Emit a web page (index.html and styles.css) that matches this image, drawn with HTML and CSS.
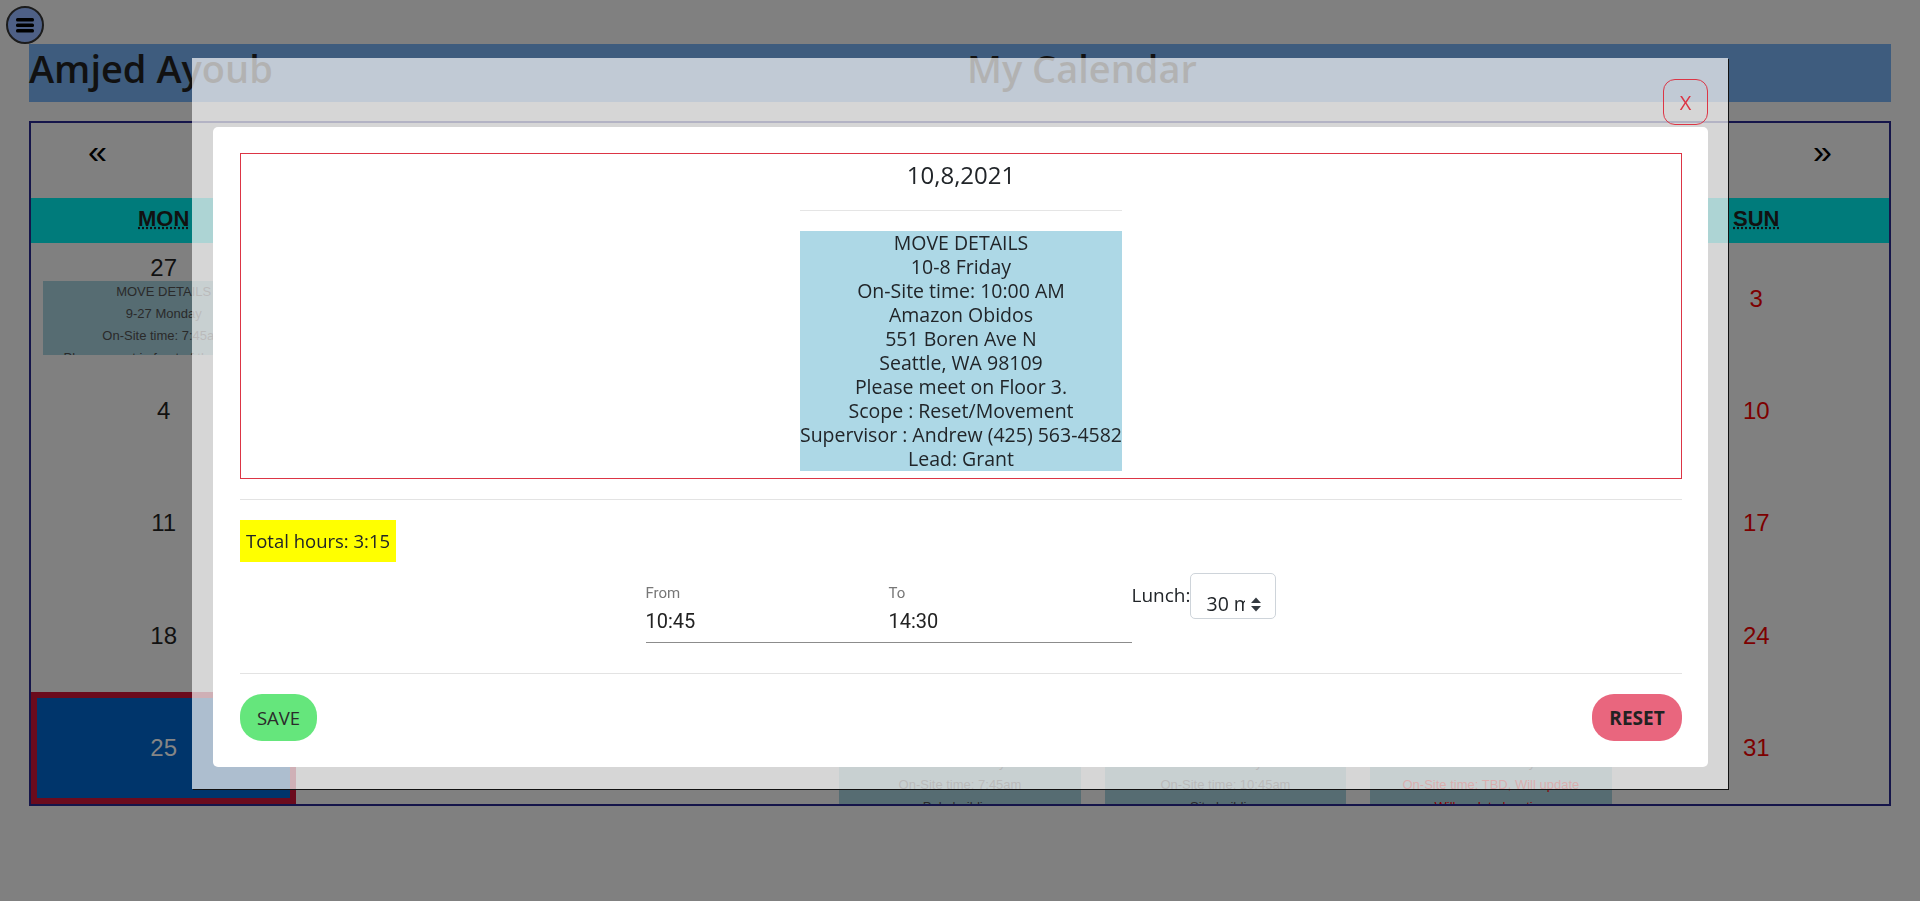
FILE: index.html
```html
<!DOCTYPE html>
<html lang="en">
<head>
<meta charset="utf-8">
<title>My Calendar</title>
<link rel="stylesheet" href="styles.css">
</head>
<body>
<button class="menu-btn" aria-label="Menu">
  <svg viewBox="0 0 18 15" width="18" height="15" aria-hidden="true">
    <rect x="0" y="0" width="18" height="3.5" rx="1.5" fill="#000"/>
    <rect x="0" y="5.5" width="18" height="3.5" rx="1.5" fill="#000"/>
    <rect x="0" y="11" width="18" height="3.5" rx="1.5" fill="#000"/>
  </svg>
</button>

<header class="page-header">
  <h1 class="user-name">Amjed Ayoub</h1>
  <h1 class="page-title">My Calendar</h1>
</header>

<section class="calendar">
  <div class="cal-nav">
    <span class="nav-arrow">«</span>
    <span class="nav-arrow">»</span>
  </div>
  <div class="cal-weekdays">
    <div class="weekday"><abbr title="Monday">MON</abbr></div>
    <div class="weekday"><abbr title="Tuesday">TUE</abbr></div>
    <div class="weekday"><abbr title="Wednesday">WED</abbr></div>
    <div class="weekday"><abbr title="Thursday">THU</abbr></div>
    <div class="weekday"><abbr title="Friday">FRI</abbr></div>
    <div class="weekday"><abbr title="Saturday">SAT</abbr></div>
    <div class="weekday"><abbr title="Sunday">SUN</abbr></div>
  </div>
  <div class="cal-grid">
    <div class="day has-event"><span class="day-num">27</span>
      <div class="event">
        <div>MOVE DETAILS</div>
        <div>9-27 Monday</div>
        <div>On-Site time: 7:45am</div>
        <div>Please meet in front of the building</div>
        <div>Amazon Doppler</div>
      </div>
    </div>
    <div class="day"><span class="day-num">28</span></div>
    <div class="day"><span class="day-num">29</span></div>
    <div class="day"><span class="day-num">30</span></div>
    <div class="day"><span class="day-num">1</span></div>
    <div class="day"><span class="day-num">2</span></div>
    <div class="day sun"><span class="day-num">3</span></div>

    <div class="day"><span class="day-num">4</span></div>
    <div class="day"><span class="day-num">5</span></div>
    <div class="day"><span class="day-num">6</span></div>
    <div class="day"><span class="day-num">7</span></div>
    <div class="day"><span class="day-num">8</span></div>
    <div class="day"><span class="day-num">9</span></div>
    <div class="day sun"><span class="day-num">10</span></div>

    <div class="day"><span class="day-num">11</span></div>
    <div class="day"><span class="day-num">12</span></div>
    <div class="day"><span class="day-num">13</span></div>
    <div class="day"><span class="day-num">14</span></div>
    <div class="day"><span class="day-num">15</span></div>
    <div class="day"><span class="day-num">16</span></div>
    <div class="day sun"><span class="day-num">17</span></div>

    <div class="day"><span class="day-num">18</span></div>
    <div class="day"><span class="day-num">19</span></div>
    <div class="day"><span class="day-num">20</span></div>
    <div class="day"><span class="day-num">21</span></div>
    <div class="day"><span class="day-num">22</span></div>
    <div class="day"><span class="day-num">23</span></div>
    <div class="day sun"><span class="day-num">24</span></div>

    <div class="day selected"><span class="day-num">25</span></div>
    <div class="day"><span class="day-num">26</span></div>
    <div class="day"><span class="day-num">27</span></div>
    <div class="day has-event"><span class="day-num">28</span>
      <div class="event">
        <div>MOVE DETAILS</div>
        <div>10-28 Thursday</div>
        <div>On-Site time: 7:45am</div>
        <div>Pole building</div>
      </div>
    </div>
    <div class="day has-event"><span class="day-num">29</span>
      <div class="event">
        <div>MOVE DETAILS</div>
        <div>10-29 Friday</div>
        <div>On-Site time: 10:45am</div>
        <div>Site building</div>
      </div>
    </div>
    <div class="day has-event"><span class="day-num">30</span>
      <div class="event">
        <div>MOVE DETAILS</div>
        <div>10-30 Saturday</div>
        <div class="event-alert">On-Site time: TBD, Will update</div>
        <div class="event-alert">Will update location</div>
      </div>
    </div>
    <div class="day sun"><span class="day-num">31</span></div>
  </div>
</section>

<div class="modal-backdrop">
  <div class="modal" role="dialog">
    <div class="modal-top">
      <button class="close-btn" aria-label="Close">X</button>
    </div>
    <div class="modal-card">
      <div class="move-frame">
        <div class="move-stack">
          <div class="move-date">10,8,2021</div>
          <hr class="move-rule">
          <div class="move-details">
            <div>MOVE DETAILS</div>
            <div>10-8 Friday</div>
            <div>On-Site time: 10:00 AM</div>
            <div>Amazon Obidos</div>
            <div>551 Boren Ave N</div>
            <div>Seattle, WA 98109</div>
            <div>Please meet on Floor 3.</div>
            <div>Scope : Reset/Movement</div>
            <div>Supervisor : Andrew (425) 563-4582</div>
            <div>Lead: Grant</div>
          </div>
        </div>
      </div>
      <hr class="card-rule">
      <div class="total-hours">Total hours: 3:15</div>
      <div class="time-row">
        <div class="time-field">
          <span class="time-label">From</span>
          <span class="time-value">10:45</span>
        </div>
        <div class="time-field">
          <span class="time-label">To</span>
          <span class="time-value">14:30</span>
        </div>
        <div class="lunch">
          <span class="lunch-label">Lunch:</span>
          <div class="lunch-select">
            <span class="lunch-text">30 min</span>
            <svg viewBox="0 0 10 15" width="10" height="15" aria-hidden="true">
              <polygon points="0,6 5,0.5 10,6" fill="#343a40"/>
              <polygon points="0,9 5,14.5 10,9" fill="#343a40"/>
            </svg>
          </div>
        </div>
      </div>
      <hr class="card-rule card-rule-bottom">
      <div class="card-actions">
        <button class="btn-save">SAVE</button>
        <button class="btn-reset">RESET</button>
      </div>
    </div>
  </div>
</div>
</body>
</html>
```

FILE: styles.css
```css
* { box-sizing: border-box; }

html, body { margin: 0; }

body {
  width: 1920px;
  height: 901px;
  overflow: hidden;
  background: #808080;
  font-family: "Liberation Sans", Arial, sans-serif;
  color: #111;
}

/* ---------- top bar ---------- */
.menu-btn {
  display: flex;
  align-items: center;
  justify-content: center;
  width: 38px;
  height: 38px;
  margin: 6px 0 0 6px;
  padding: 0;
  border: 2px solid #1c1c1c;
  border-radius: 50%;
  background: #4e6086;
}

.page-header {
  display: flex;
  align-items: flex-start;
  height: 58px;
  margin: 0 29px;
  background: #3e5c7e;
  font-family: "Open Sans", sans-serif;
}

.page-header h1 {
  margin: 0;
  font-size: 38px;
  font-weight: 600;
  line-height: 49px;
  color: #111;
  white-space: nowrap;
}

.page-title {
  flex: 1;
  text-align: center;
}

/* ---------- calendar ---------- */
.calendar {
  margin: 19px 29px 0;
  border: 2px solid #15154a;
}

.cal-nav {
  display: flex;
  justify-content: space-between;
  align-items: center;
  height: 75px;
  padding: 0 57px 20px;
}

.nav-arrow {
  font-size: 34px;
  line-height: 1;
  color: #000;
}

.cal-weekdays {
  display: grid;
  grid-template-columns: repeat(7, 1fr);
  align-items: center;
  height: 45px;
  padding-bottom: 4px;
  background: #007b7b;
  text-align: center;
}

.weekday abbr {
  font-size: 22px;
  font-weight: bold;
  color: #111;
  text-decoration: underline dotted;
}

.cal-grid {
  display: grid;
  grid-template-columns: repeat(7, 1fr);
  grid-template-rows: repeat(5, 1fr);
  height: 561px;
}

.day {
  display: flex;
  flex-direction: column;
  justify-content: center;
  align-items: center;
  overflow: hidden;
  min-width: 0;
}

.day-num {
  font-size: 24px;
  line-height: 26px;
  color: #111;
}

.day.sun .day-num { color: #7d0000; }

.day.has-event {
  justify-content: flex-start;
  align-items: stretch;
  padding-top: 12px;
  text-align: center;
}

.event {
  margin: 0 12px;
  background: #566c72;
  font-size: 13px;
  line-height: 22px;
  color: #2a2a2a;
  white-space: nowrap;
}

.event-alert { color: #8b0000; }

.day.selected {
  border: 6px solid #6b0b1d;
  background: #00356b;
}

.day.selected .day-num { color: #858585; }

/* ---------- modal ---------- */
.modal-backdrop {
  position: fixed;
  inset: 0;
  display: flex;
  justify-content: center;
  align-items: flex-start;
  padding-top: 58px;
}

.modal {
  width: 1536px;
  padding: 21px 20px 22px 21px;
  background: rgba(255, 255, 255, 0.68);
  box-shadow: 1px 1px 0 #111;
  font-family: "Open Sans", sans-serif;
  color: #212529;
}

.modal-top {
  display: flex;
  justify-content: flex-end;
  margin-bottom: 2px;
}

.close-btn {
  width: 45px;
  height: 46px;
  padding: 0;
  border: 1px solid #dc3545;
  border-radius: 12px;
  background: transparent;
  color: #dc3545;
  font-family: "Open Sans", sans-serif;
  font-size: 20px;
}

.modal-card {
  padding: 26px 26px 26px 27px;
  border-radius: 5px;
  background: #fff;
}

.move-frame {
  padding-bottom: 7px;
  border: 1px solid #dc3545;
}

.move-stack {
  width: fit-content;
  margin: 0 auto;
}

.move-date {
  margin-top: 5px;
  font-size: 24px;
  line-height: 32px;
  text-align: center;
}

.move-rule {
  margin: 19px 0 20px;
  border: 0;
  border-top: 1px solid #e5e5e5;
}

.move-details {
  background: #add8e6;
  font-size: 19.5px;
  line-height: 24px;
  text-align: center;
  white-space: nowrap;
}

.card-rule {
  margin: 20px 0 0;
  border: 0;
  border-top: 1px solid #e3e3e3;
}

.card-rule-bottom { margin: 30px 0 20px; }

.total-hours {
  width: fit-content;
  margin-top: 20px;
  padding: 9px 6px;
  background: #ffff00;
  font-size: 18.5px;
  line-height: 24px;
}

.time-row {
  display: flex;
  justify-content: center;
  align-items: flex-start;
  margin-top: 11px;
}

.time-field {
  display: flex;
  flex-direction: column;
  width: 243px;
  margin-top: 10px;
  border-bottom: 1px solid #8c8c8c;
  font-family: Roboto, sans-serif;
}

.time-label {
  font-size: 15px;
  line-height: 20px;
  color: #777;
}

.time-value {
  padding: 4px 0 7px;
  font-size: 20px;
  line-height: 28px;
  color: #222;
}

.lunch {
  display: flex;
  align-items: flex-start;
}

.lunch-label {
  margin-top: 10px;
  font-size: 19px;
  line-height: 24px;
}

.lunch-select {
  display: flex;
  align-items: center;
  width: 86px;
  height: 46px;
  padding: 16px 14px 0 15px;
  border: 1px solid #ced4da;
  border-radius: 5px;
}

.lunch-text {
  width: 39px;
  overflow: hidden;
  white-space: nowrap;
  font-size: 19.5px;
  line-height: 26px;
}

.lunch-select svg {
  flex: none;
  margin-left: 6px;
}

.card-actions {
  display: flex;
  justify-content: space-between;
}

.btn-save,
.btn-reset {
  height: 47px;
  padding: 0;
  border: 0;
  border-radius: 22px;
  font-family: "Open Sans", sans-serif;
}

.btn-save {
  width: 77px;
  background: #65e67c;
  color: #2b2b2b;
  font-size: 18.5px;
}

.btn-reset {
  width: 90px;
  background: #e9667e;
  color: #222;
  font-size: 19px;
  font-weight: bold;
}
```
